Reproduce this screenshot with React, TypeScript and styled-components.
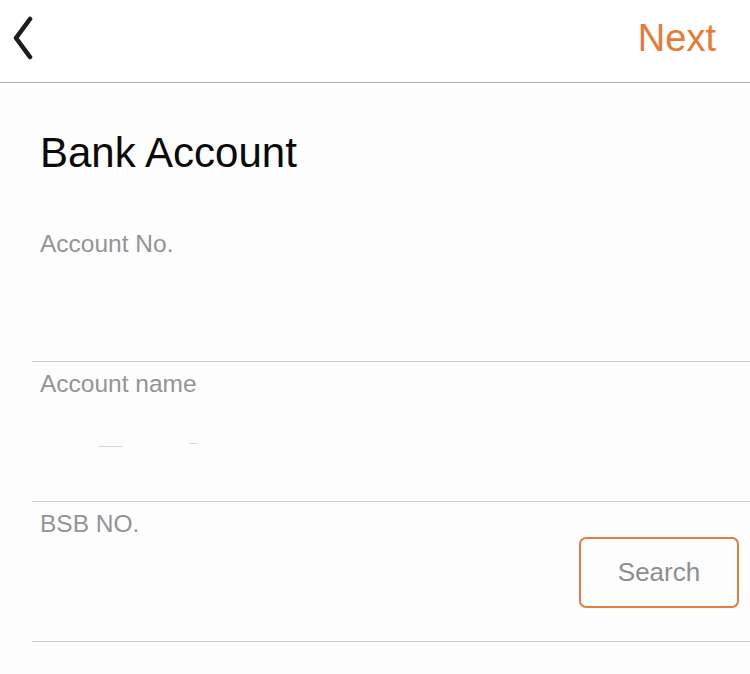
import React from "react";
import styled, { createGlobalStyle } from "styled-components";

const GlobalStyle = createGlobalStyle`
  html, body {
    margin: 0;
    padding: 0;
    background: #fdfdfd;
  }
  * { box-sizing: border-box; }
  body {
    font-family: "Liberation Sans", Arial, Helvetica, sans-serif;
    -webkit-font-smoothing: antialiased;
  }
`;

const Page = styled.div`
  width: 750px;
  min-height: 674px;
  background: #fdfdfd;
  display: flex;
  flex-direction: column;
`;

const Header = styled.header`
  height: 83px;
  background: #ffffff;
  border-bottom: 1px solid #b4b4b6;
  display: flex;
  align-items: center;
  justify-content: space-between;
  padding: 0 34px 6px 12px;
`;

const BackButton = styled.button`
  border: 0;
  background: transparent;
  padding: 0;
  display: flex;
  align-items: center;
  cursor: pointer;
`;

const NextButton = styled.button`
  border: 0;
  background: transparent;
  padding: 0;
  font-family: inherit;
  font-size: 38px;
  line-height: 42px;
  color: #e97a36;
  cursor: pointer;
`;

const Title = styled.h1`
  margin: 46px 0 0 40px;
  font-size: 42px;
  line-height: 48px;
  font-weight: 400;
  color: #0a0a0a;
`;

const Form = styled.div`
  margin: 45px 0 0 32px;
  display: flex;
  flex-direction: column;
`;

const Field = styled.div`
  height: 140px;
  border-bottom: 1px solid #cfcfd2;
  padding: 8px 0 0 8px;
  display: flex;
  flex-direction: column;
`;

const Label = styled.label`
  font-size: 24.5px;
  line-height: 27px;
  color: #939398;
`;

const ValueLine = styled.div`
  display: flex;
  align-items: flex-start;
  justify-content: flex-end;
  padding-right: 11px;
`;

const Redacted = styled.div`
  margin-top: 42px;
  position: relative;
  height: 10px;
`;

const Mark = styled.span<{ $left: number; $top: number; $w: number }>`
  position: absolute;
  left: ${(p) => p.$left}px;
  top: ${(p) => p.$top}px;
  width: ${(p) => p.$w}px;
  height: 1px;
  background: #d4d4d6;
`;

const SearchButton = styled.button`
  width: 160px;
  height: 71px;
  border: 2px solid #df7f42;
  border-radius: 7px;
  background: #fdfdfe;
  font-family: inherit;
  font-size: 26px;
  color: #8e8e93;
  cursor: pointer;
`;

const Chevron = () => (
  <svg width="24" height="44" viewBox="0 0 24 44" aria-hidden="true">
    <path
      d="M18 3 L4 22 L18 41"
      fill="none"
      stroke="#1c1c1e"
      strokeWidth="4.6"
      strokeLinecap="round"
      strokeLinejoin="round"
    />
  </svg>
);

export default function App() {
  return (
    <Page>
      <GlobalStyle />
      <Header>
        <BackButton aria-label="Back">
          <Chevron />
        </BackButton>
        <NextButton>Next</NextButton>
      </Header>
      <Title>Bank Account</Title>
      <Form>
        <Field>
          <Label>Account No.</Label>
        </Field>
        <Field>
          <Label>Account name</Label>
          <Redacted>
            <Mark $left={58} $top={7} $w={24} />
            <Mark $left={150} $top={4} $w={7} />
          </Redacted>
        </Field>
        <Field>
          <Label>BSB NO.</Label>
          <ValueLine>
            <SearchButton>Search</SearchButton>
          </ValueLine>
        </Field>
      </Form>
    </Page>
  );
}
